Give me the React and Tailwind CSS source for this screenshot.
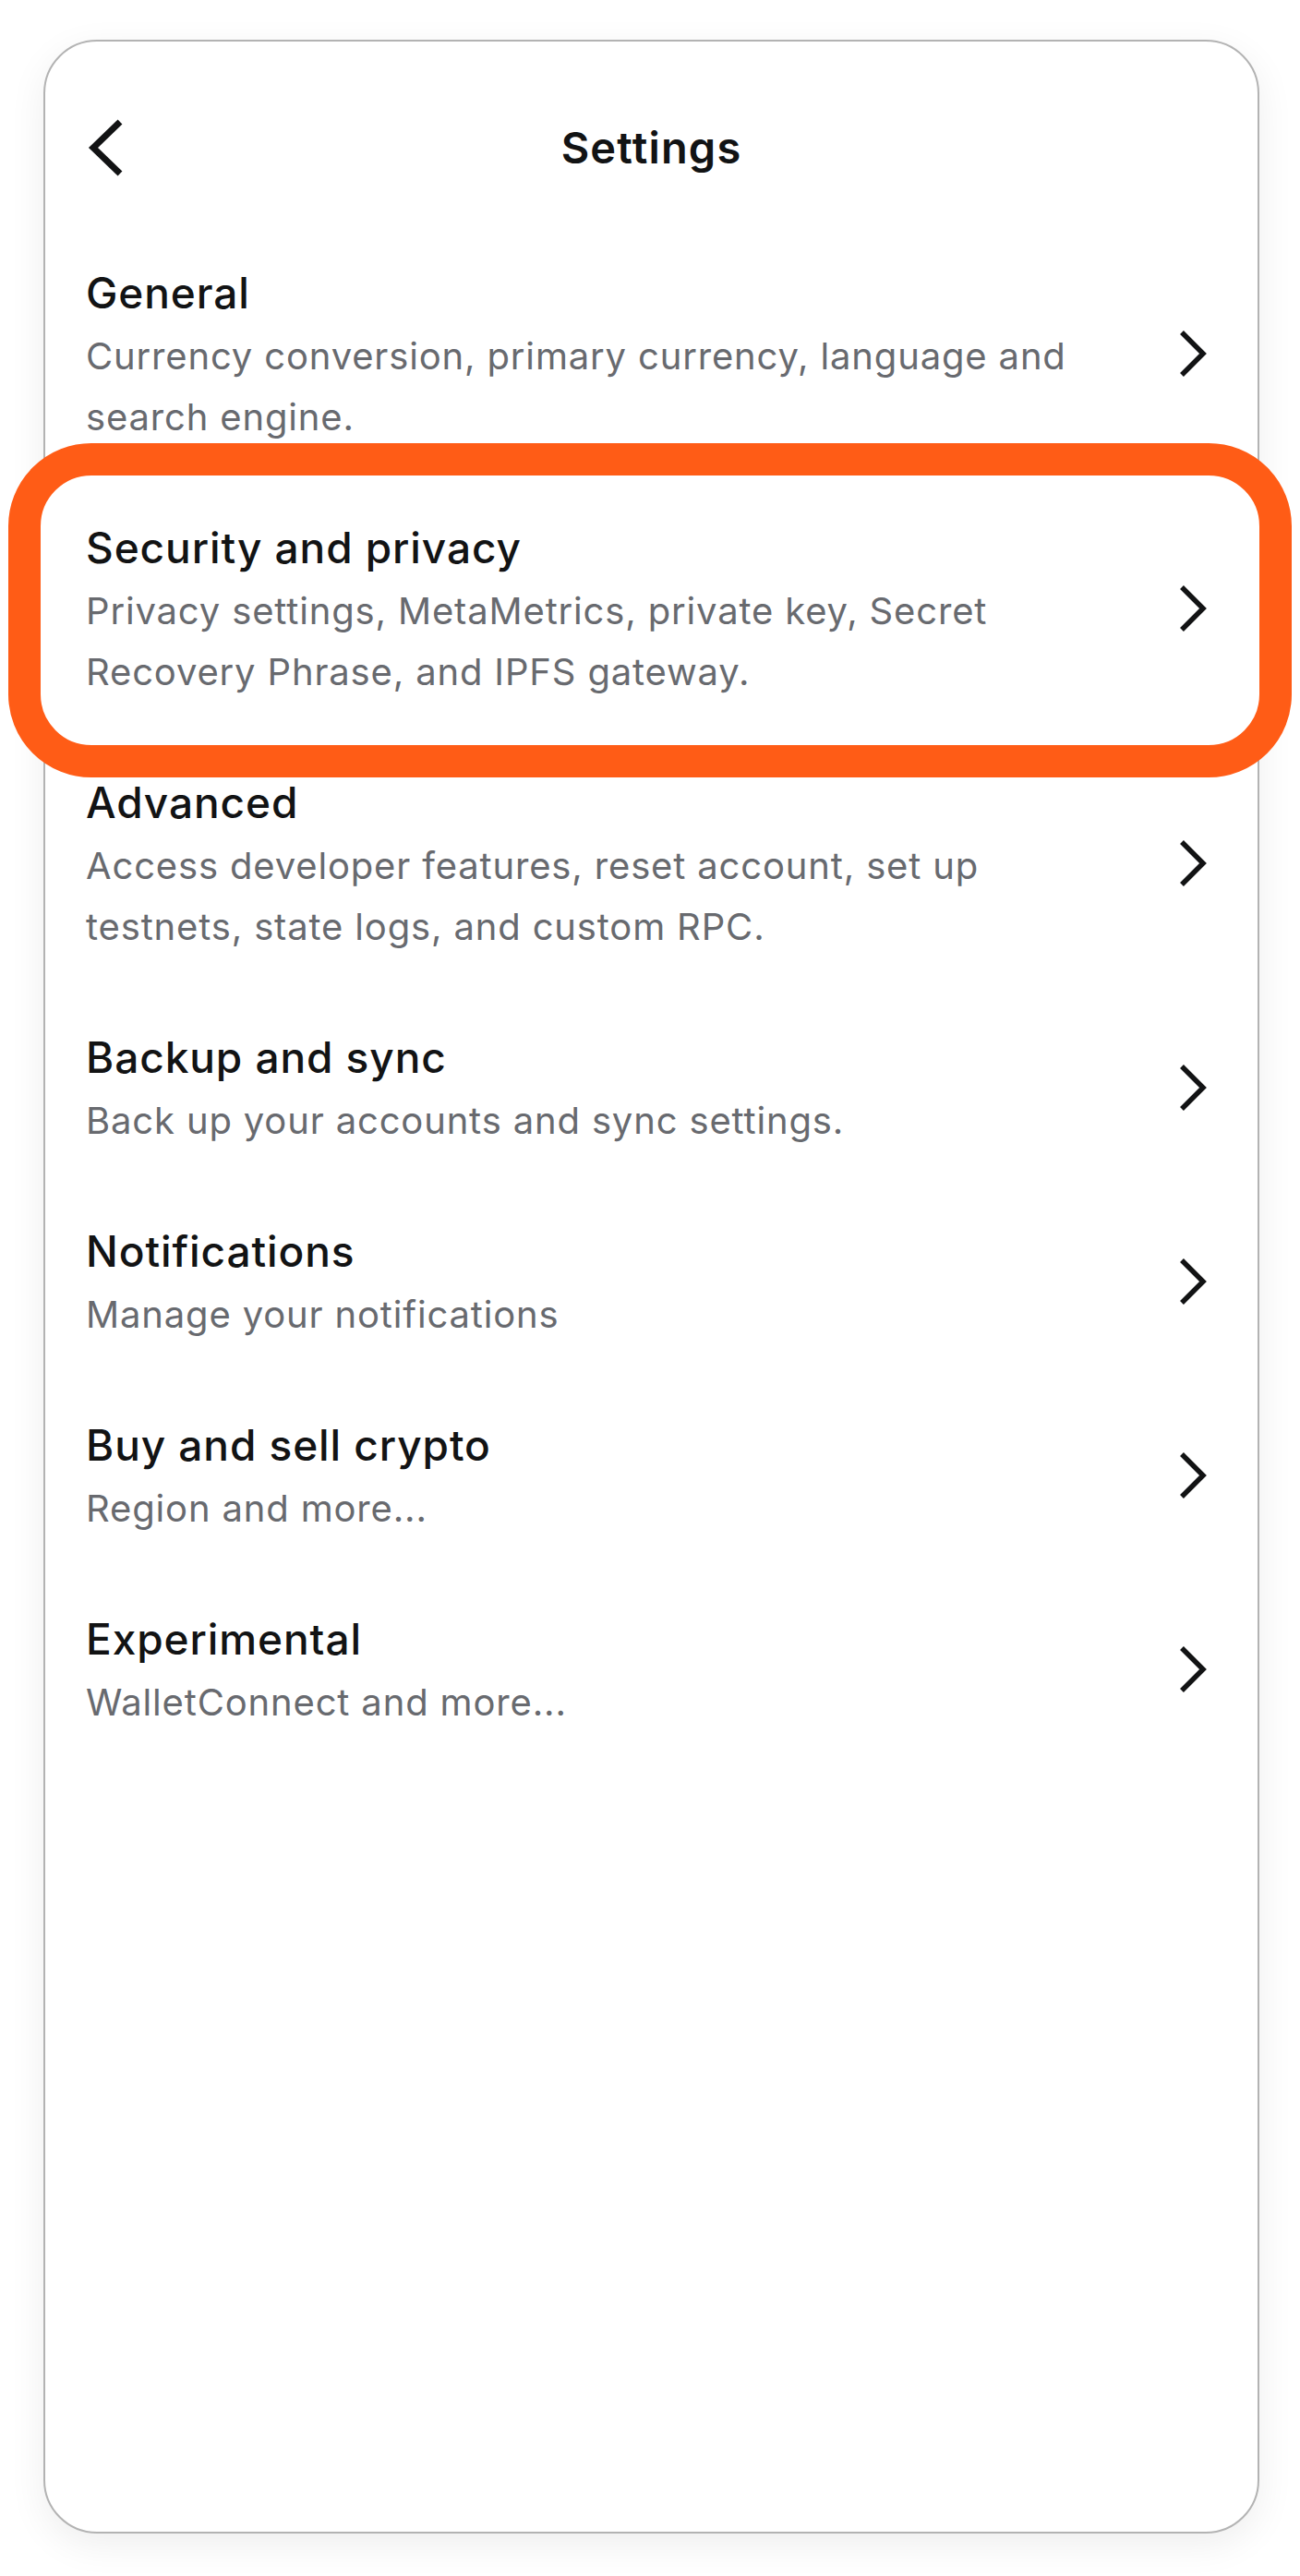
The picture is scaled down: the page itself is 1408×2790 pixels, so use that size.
import React from "react";

const items = [
  { title: "General", desc: "Currency conversion, primary currency, language and search engine." },
  { title: "Security and privacy", desc: "Privacy settings, MetaMetrics, private key, Secret Recovery Phrase, and IPFS gateway.", highlight: true },
  { title: "Advanced", desc: "Access developer features, reset account, set up testnets, state logs, and custom RPC." },
  { title: "Backup and sync", desc: "Back up your accounts and sync settings." },
  { title: "Notifications", desc: "Manage your notifications" },
  { title: "Buy and sell crypto", desc: "Region and more..." },
  { title: "Experimental", desc: "WalletConnect and more..." },
];

function ChevronRight() {
  return (
    <svg width="32" height="56" viewBox="0 0 32 56" fill="none" className="shrink-0">
      <path d="M5 5 L28 28 L5 51" stroke="#121314" strokeWidth="5.5" strokeLinejoin="miter" />
    </svg>
  );
}

function ChevronLeft() {
  return (
    <svg width="42" height="68" viewBox="0 0 42 68" fill="none">
      <path d="M36 6 L7 34 L36 62" stroke="#121314" strokeWidth="7" strokeLinejoin="miter" />
    </svg>
  );
}

function Item({ title, desc, highlight }) {
  return (
    <div className="relative">
      {highlight && (
        <div className="absolute left-[-40px] right-[-37px] top-[-41px] bottom-[-45px] rounded-[90px] border-[35px] border-[#FF5C16] bg-white" />
      )}
      <div className="relative flex items-center pl-[44px] pr-[55px] py-[36px]">
        <div className="flex-1 mr-[70px]">
          <div className="text-[46px] leading-[72px] font-medium tracking-[0.02em] text-[#121314]">{title}</div>
          <div className="text-[40px] leading-[66px] tracking-[0.021em] text-[#686a6f]">{desc}</div>
        </div>
        <ChevronRight />
      </div>
    </div>
  );
}

export default function App() {
  return (
    <div
      className="min-h-[2790px] bg-white pt-[43px] pl-[47px]"
      style={{ fontFamily: "Inter, 'Noto Sans', sans-serif" }}
    >
      <div className="w-[1317px] h-[2701px] rounded-[58px] border-2 border-[#b3b3b3] bg-white shadow-[0_12px_40px_rgba(0,0,0,0.07)]">
        <div className="pt-[55px]">
          <div className="relative h-[120px] flex items-center justify-center">
            <div className="absolute left-[45px] top-[26px]">
              <ChevronLeft />
            </div>
            <div className="text-[47px] font-semibold tracking-[0.025em] text-[#121314]">Settings</div>
          </div>
        </div>
        <div className="mt-[25px]">
          {items.map((it) => (
            <Item key={it.title} {...it} />
          ))}
        </div>
      </div>
    </div>
  );
}
